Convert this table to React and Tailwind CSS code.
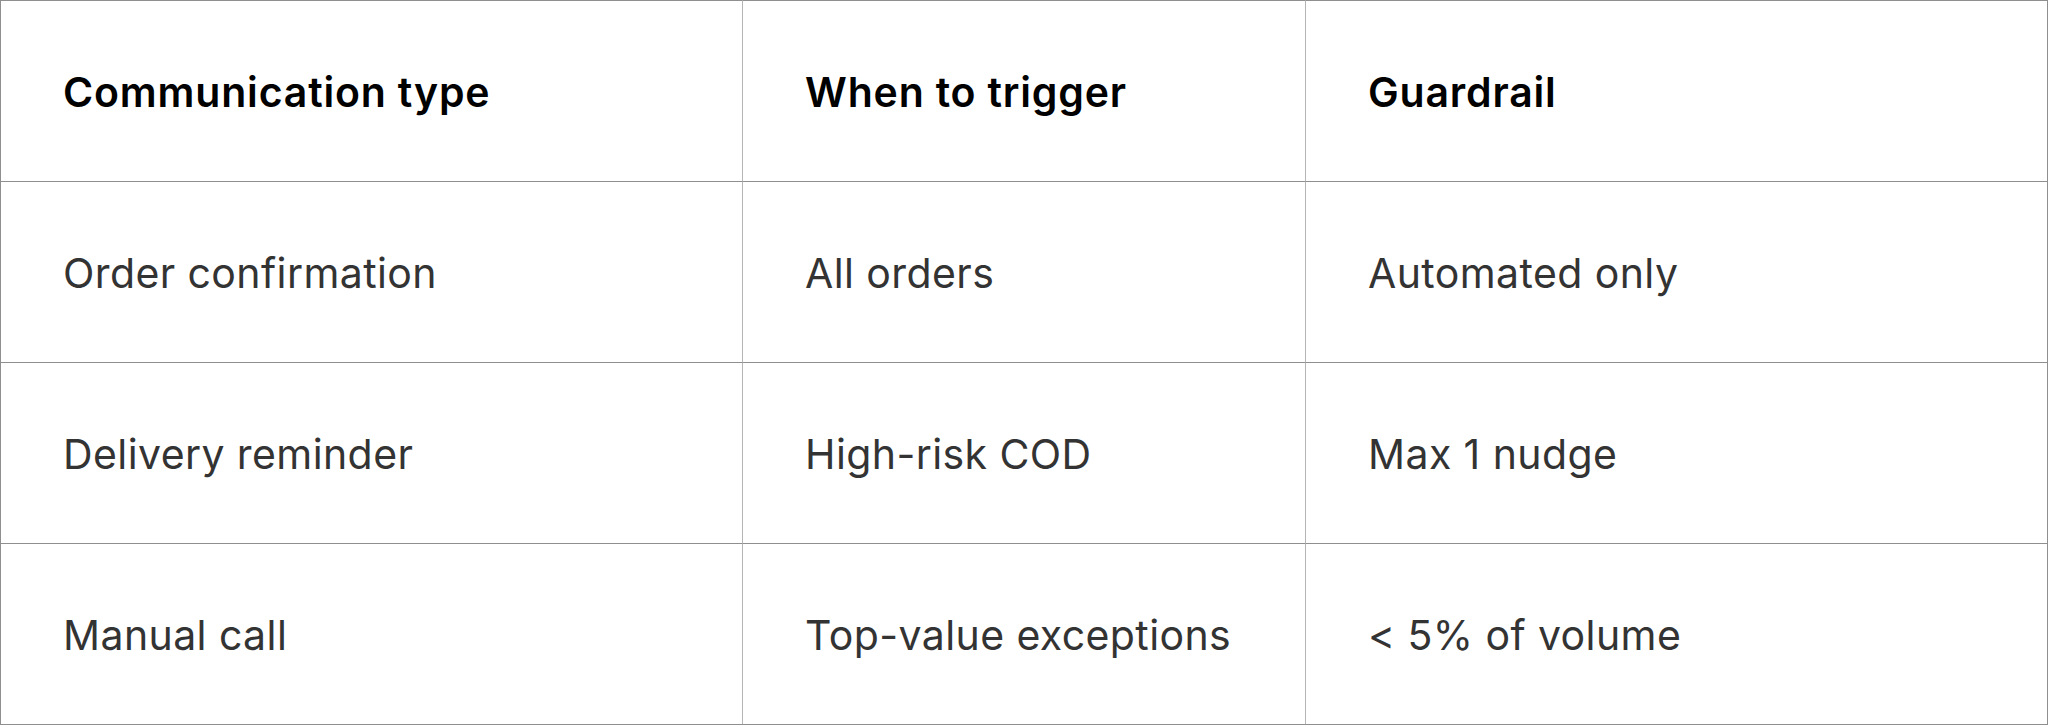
import React from "react";

const rows = [
  ["Order confirmation", "All orders", "Automated only"],
  ["Delivery reminder", "High-risk COD", "Max 1 nudge"],
  ["Manual call", "Top-value exceptions", "< 5% of volume"],
];

const headers = ["Communication type", "When to trigger", "Guardrail"];

const Cell = ({ children, head, first }) => {
  return (
    <div
      className={`h-[181px] flex items-center border-t border-t-[#8f8f8f] pl-[62px] pt-[2px] ${
        first ? "border-l border-l-[#8f8f8f]" : "border-l border-l-[#b5b5b5]"
      } ${head ? "font-semibold text-black tracking-[0.02em]" : "font-normal text-[#333333] tracking-[0.01em]"}`}
    >
      {children}
    </div>
  );
};

const App = () => {
  return (
    <div className="w-[2048px] h-[725px] bg-white" style={{ fontFamily: "Inter, 'Liberation Sans', sans-serif" }}>
      <div className="grid grid-cols-[742px_563px_742px] border-r border-b border-[#8f8f8f] text-[41px] leading-none">
        {headers.map((h, i) => (
          <Cell key={h} head first={i === 0}>
            {h}
          </Cell>
        ))}
        {rows.map((row) =>
          row.map((text, i) => (
            <Cell key={text} first={i === 0}>
              {text}
            </Cell>
          ))
        )}
      </div>
    </div>
  );
};

export default App;
